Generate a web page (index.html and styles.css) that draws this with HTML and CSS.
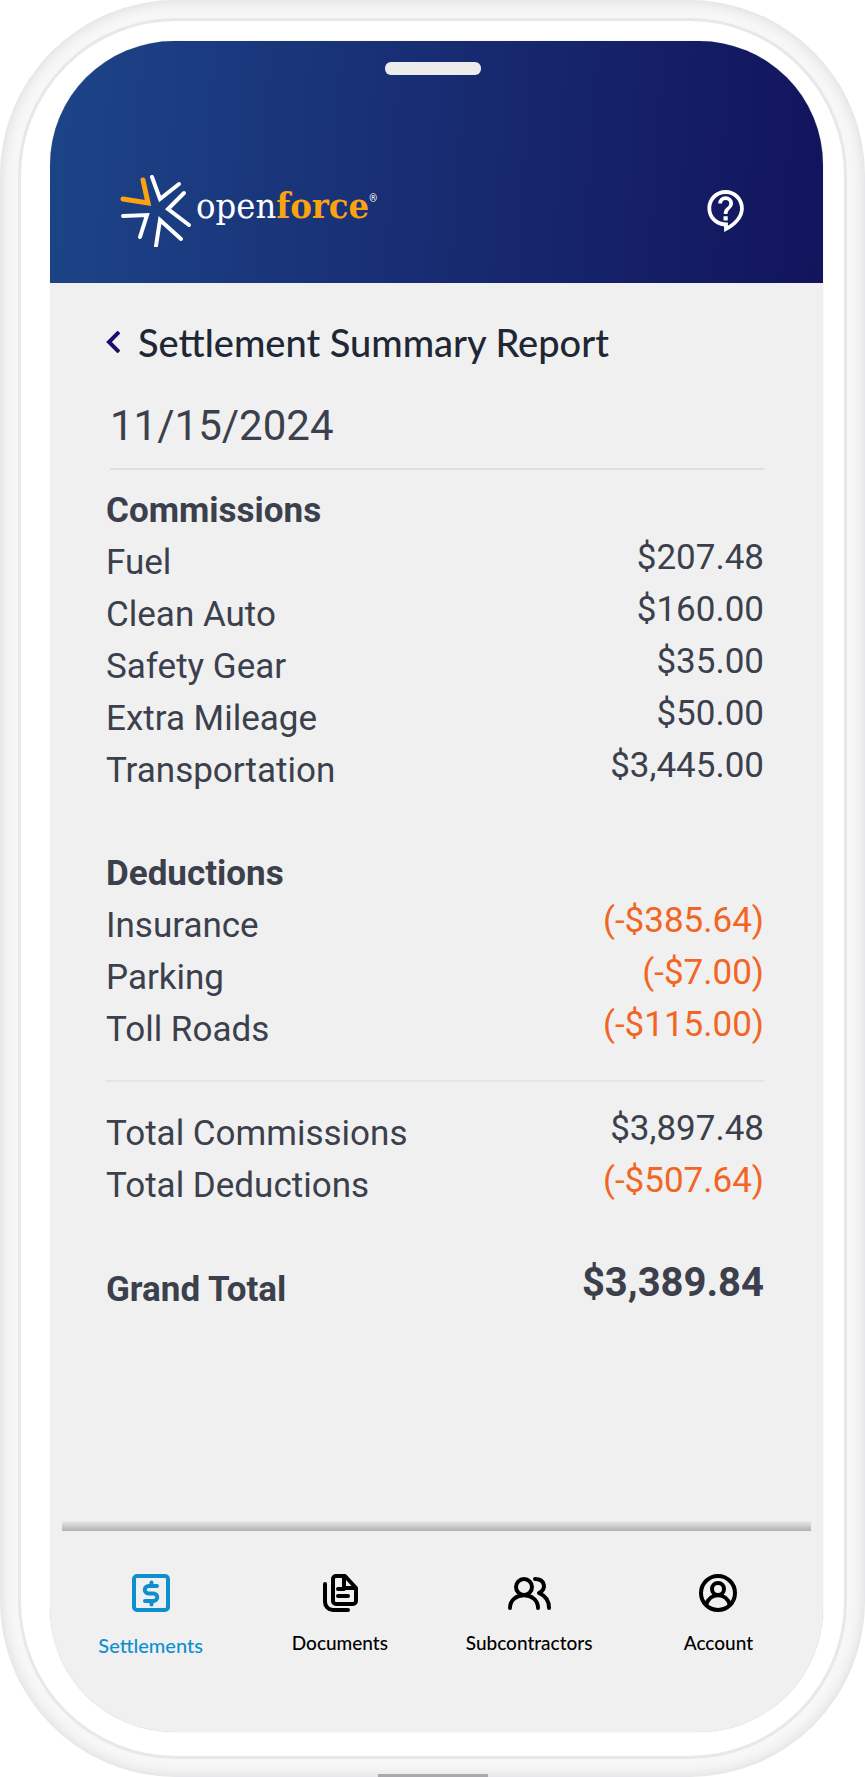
FILE: index.html
```html
<!DOCTYPE html>
<html lang="en">
    <head>
        <meta charset="UTF-8" />
        <meta name="viewport" content="width=device-width, initial-scale=1.0" />
        <title>Settlement Summary Report</title>
        <link rel="stylesheet" href="styles.css">
    </head>
    <body>
        <div class="phone">
            <div class="bezel">
                <div class="screen">
                    <header class="header">
                        <div class="speaker"></div>
                        <div class="brand-row">
                            <a href="#" class="brand">
                                <svg class="brand-mark" width="72" height="72" viewBox="0 0 72 72" fill="none" stroke="#fff" stroke-width="4" stroke-linecap="round">
                                    <path stroke="#f9a312" stroke-width="5" d="M23 5l5 23-25-4" />
                                    <path d="M32 2l8 22 19-15" />
                                    <path d="M64 18L48 34l21 16" />
                                    <path d="M61 64L40 45l-4 26" />
                                    <path d="M20 62l7-22-24 1" />
                                </svg>
                                <span class="brand-name">open<b>force</b></span><sup>®</sup>
                            </a>
                            <button type="button" class="help" aria-label="Help">
                                <svg width="38" height="44" viewBox="2 1 20 23" fill="#fff">
                                    <path fill-rule="evenodd" d="M11 23.600v-3C6 20.300 2.200 16.100 2.200 11.100 2.200 5.800 6.500 1.500 11.800 1.500s9.600 4.300 9.600 9.600c0 5-4 9.500-10.400 12.500zM13 18.500v1.800c4-2.300 6.400-5.700 6.400-9.200 0-4.300-3.300-7.600-7.600-7.600s-7.600 3.300-7.600 7.600 3.300 7.400 7.600 7.400z" />
                                    <path d="M10.700 15.300h2.200v2.200h-2.200zM7.900 8.600a3.900 3.900 0 0 1 7.800 0c0 2.500-2.900 2.900-2.900 5.500h-2c0-3.500 2.900-3.300 2.900-5.500a1.900 1.900 0 0 0-3.800 0z" />
                                </svg>
                            </button>
                        </div>
                    </header>

                    <main class="content">
                        <div class="title-row">
                            <a href="#" class="back" aria-label="Back">
                                <svg width="14" height="22" viewBox="0 0 14 22" fill="none" stroke="#1a0f6b" stroke-width="4">
                                    <path d="M13 1L3 11l10 10" />
                                </svg>
                            </a>
                            <h1>Settlement Summary Report</h1>
                        </div>
                        <p class="date">11/15/2024</p>

                        <table class="report">
                            <tbody>
                                <tr><th colspan="2">Commissions</th></tr>
                                <tr><td>Fuel</td><td>$207.48</td></tr>
                                <tr><td>Clean Auto</td><td>$160.00</td></tr>
                                <tr><td>Safety Gear</td><td>$35.00</td></tr>
                                <tr><td>Extra Mileage</td><td>$50.00</td></tr>
                                <tr><td>Transportation</td><td>$3,445.00</td></tr>
                            </tbody>
                        </table>
                        <table class="report deductions">
                            <tbody>
                                <tr><th colspan="2">Deductions</th></tr>
                                <tr><td>Insurance</td><td class="minus">(-$385.64)</td></tr>
                                <tr><td>Parking</td><td class="minus">(-$7.00)</td></tr>
                                <tr><td>Toll Roads</td><td class="minus">(-$115.00)</td></tr>
                            </tbody>
                        </table>
                        <table class="report totals">
                            <tbody>
                                <tr><td>Total Commissions</td><td>$3,897.48</td></tr>
                                <tr><td>Total Deductions</td><td class="minus">(-$507.64)</td></tr>
                            </tbody>
                            <tfoot>
                                <tr><th>Grand Total</th><td>$3,389.84</td></tr>
                            </tfoot>
                        </table>
                    </main>

                    <div class="divider"></div>
                    <nav class="tabs">
                        <a href="#" class="tab active">
                            <svg width="40" height="40" viewBox="0 0 40 40" fill="none" stroke="currentColor" stroke-width="4" stroke-linecap="round" stroke-linejoin="round">
                                <rect x="3" y="3" width="34" height="34" rx="3" />
                                <path d="M26 13h-8.500a3.500 3.500 0 0 0 0 7.500h5a3.500 3.500 0 0 1 0 7.500H14M20.500 9.500V13M20.500 28v3.500" />
                            </svg>
                            <span>Settlements</span>
                        </a>
                        <a href="#" class="tab">
                            <svg width="40" height="40" viewBox="0 0 40 40" fill="none" stroke="currentColor" stroke-width="4" stroke-linecap="round" stroke-linejoin="round">
                                <path d="M16 3h9l11 12v13a3 3 0 0 1-3 3H16a3 3 0 0 1-3-3V6a3 3 0 0 1 3-3zM24 4v11h11M18 16h6M18 23h10M5 11v18a8 8 0 0 0 8 8h15" />
                            </svg>
                            <span>Documents</span>
                        </a>
                        <a href="#" class="tab">
                            <svg width="44" height="40" viewBox="0 0 44 40" fill="none" stroke="currentColor" stroke-width="4" stroke-linecap="round" stroke-linejoin="round">
                                <circle cx="17" cy="14" r="8" />
                                <path d="M3 35c0-17 28-17 28 0M28 6c10 0 12 10 4 14 7 3 10 8 10 15" />
                            </svg>
                            <span>Subcontractors</span>
                        </a>
                        <a href="#" class="tab">
                            <svg width="40" height="40" viewBox="0 0 40 40" fill="none" stroke="currentColor" stroke-width="4">
                                <circle cx="20" cy="20" r="17" />
                                <circle cx="20" cy="16" r="6" />
                                <path d="M8 32c4-13 20-13 24 0" />
                            </svg>
                            <span>Account</span>
                        </a>
                    </nav>
                </div>
            </div>
            <div class="port"></div>
        </div>
    </body>
</html>
```

FILE: styles.css
```css
* {
    box-sizing: border-box;
}
body {
    margin: 0;
    background-color: #fff;
    font-family: Roboto, sans-serif;
    color: #3b404c;
}
a {
    color: inherit;
    text-decoration: none;
}
.phone {
    position: relative;
    min-height: 100vh;
    padding: 18px;
    display: flex;
    border-radius: 176px;
    background-color: #f7f7f8;
    box-shadow: inset 0 0 14px #d6d6db;
}
.bezel {
    flex: 1;
    display: flex;
    padding: 20px 21px 24px 29px;
    border: 3px solid #e8e8ea;
    border-radius: 158px;
    background-color: #fff;
}
.screen {
    flex: 1;
    display: flex;
    flex-direction: column;
    overflow: hidden;
    border-radius: 124px;
    background-color: #f0f0f0;
    box-shadow: 0 0 1px #b8bcc4;
}
.header {
    height: 242px;
    padding: 21px 78px 0 70px;
    background: linear-gradient(94deg, #1d4488, #12145c);
}
.speaker {
    width: 96px;
    height: 13px;
    margin: 0 auto;
    border-radius: 6px;
    background-color: #ececec;
}
.brand-row {
    display: flex;
    justify-content: space-between;
    align-items: center;
    margin-top: 100px;
}
.brand {
    display: flex;
    align-items: center;
    color: #fff;
}
.brand-name {
    margin-left: 4px;
    padding-bottom: 12px;
    font-family: "DejaVu Serif Condensed", "DejaVu Serif", serif;
    font-size: 36px;
    line-height: 40px;
}
.brand-name b {
    color: #f9a312;
}
.brand sup {
    align-self: flex-start;
    margin-top: 18px;
    font-size: 10px;
    line-height: 12px;
}
.help {
    padding: 0;
    border: none;
    background: none;
    cursor: pointer;
}
.help svg {
    display: block;
}
.content {
    flex: 1;
    padding: 35px 59px 0 56px;
}
.title-row {
    display: flex;
    align-items: center;
    gap: 18px;
    height: 48px;
}
.back svg {
    display: block;
}
h1 {
    margin: 0;
    font-family: Lato, sans-serif;
    font-size: 38px;
    font-weight: 500;
    line-height: 48px;
    color: #1f2735;
}
.date {
    margin: 0 0 15px 4px;
    padding: 36px 0 18px;
    border-bottom: 2px solid #dedede;
    font-size: 42px;
    line-height: 48px;
}
.report {
    width: 100%;
    margin-bottom: 51px;
    border-collapse: collapse;
    font-size: 35px;
    line-height: 52px;
}
.report th,
.report td {
    padding: 0;
    text-align: left;
    vertical-align: top;
}
.report td + td,
.report th + td {
    line-height: 42px;
    text-align: right;
}
.report .minus {
    color: #f26522;
}
.deductions {
    margin-bottom: 24px;
}
.totals {
    margin-bottom: 0;
    border-top: 2px solid #e4e4e4;
}
.totals tbody tr:first-child td {
    padding-top: 26px;
}
.totals tfoot th,
.totals tfoot td {
    padding-top: 52px;
    font-weight: 700;
}
.totals tfoot th + td {
    font-size: 40px;
    line-height: 38px;
}
.divider {
    height: 10px;
    margin: 0 12px;
    background: linear-gradient(#e9e9e9, #b0b0b0);
}
.tabs {
    display: grid;
    grid-template-columns: repeat(4, 1fr);
    height: 201px;
    margin: 0 10px 0 6px;
}
.tab {
    display: flex;
    flex-direction: column;
    align-items: center;
    gap: 18px;
    padding-top: 42px;
    font-family: Lato, sans-serif;
    font-size: 19px;
    font-weight: 500;
    line-height: 24px;
    color: #000;
}
.tab.active {
    gap: 20px;
    font-size: 20px;
    color: #0d8fd0;
}
.port {
    position: absolute;
    bottom: 0;
    left: 50%;
    width: 110px;
    height: 3px;
    margin-left: -55px;
    background-color: #a9a9ab;
}
```
